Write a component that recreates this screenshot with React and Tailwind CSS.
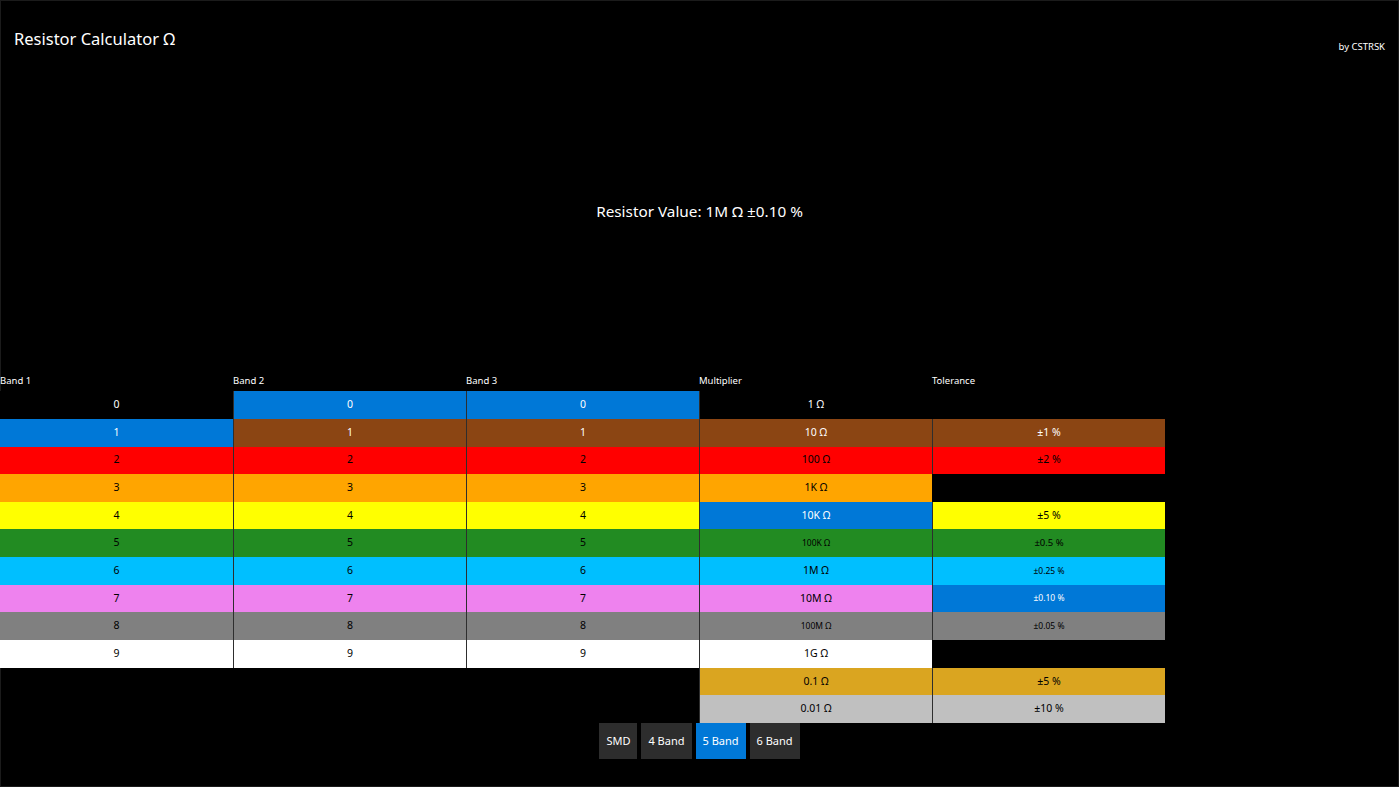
import React, { useState } from "react";

const C = {
  black: "bg-black text-white",
  blue: "bg-[#0078d7] text-white",
  brown: "bg-[#8b4513] text-white",
  red: "bg-[#ff0000] text-black",
  orange: "bg-[#ffa500] text-black",
  yellow: "bg-[#ffff00] text-black",
  green: "bg-[#228b22] text-black",
  sky: "bg-[#00bfff] text-black",
  violet: "bg-[#ee82ee] text-black",
  gray: "bg-[#808080] text-black",
  white: "bg-white text-black",
  gold: "bg-[#daa520] text-black",
  silver: "bg-[#c0c0c0] text-black",
  none: "bg-black",
};

const digitColors = ["black", "brown", "red", "orange", "yellow", "green", "sky", "violet", "gray", "white"];

const multipliers = [
  ["1 Ω", "black"],
  ["10 Ω", "brown"],
  ["100 Ω", "red"],
  ["1K Ω", "orange"],
  ["10K Ω", "yellow"],
  ["100K Ω", "green", "small"],
  ["1M Ω", "sky"],
  ["10M Ω", "violet"],
  ["100M Ω", "gray", "small"],
  ["1G Ω", "white"],
  ["0.1 Ω", "gold"],
  ["0.01 Ω", "silver"],
];

const tolerances = [
  [null, "none"],
  ["±1 %", "brown"],
  ["±2 %", "red"],
  [null, "none"],
  ["±5 %", "yellow"],
  ["±0.5 %", "green", "mid"],
  ["±0.25 %", "sky", "small"],
  ["±0.10 %", "violet", "small"],
  ["±0.05 %", "gray", "small"],
  [null, "none"],
  ["±5 %", "gold"],
  ["±10 %", "silver"],
];

function Cell({ label, color, selected, size, first }) {
  const cls = selected ? C.blue : C[color];
  const txt = size === "small" ? "text-[8.5px]" : size === "mid" ? "text-[9.5px]" : "text-[10.5px]";
  return (
    <div
      className={`h-[27.65px] flex items-center justify-center ${txt} ${cls} ${
        first || label === null ? "" : "border-l border-[#2e2e2e]"
      }`}
    >
      {label}
    </div>
  );
}

function Column({ title, items, selected, first }) {
  return (
    <div className="w-[233px] flex flex-col">
      <div className="h-[17px] text-[9.5px] leading-[14px] text-white">{title}</div>
      {items.map((it, i) => (
        <Cell
          key={i}
          label={it[0]}
          color={it[1]}
          size={it[2]}
          selected={i === selected && it[0] !== null}
          first={first}
        />
      ))}
    </div>
  );
}

export default function App() {
  const [mode, setMode] = useState("5 Band");
  const digits = digitColors.map((c, i) => [String(i), c]);

  return (
    <div
      className="w-full h-[787px] bg-black shadow-[inset_0_0_0_1px_#1b1b1b] text-white overflow-hidden flex flex-col"
      style={{ fontFamily: '"Segoe UI", "Noto Sans", "Open Sans", sans-serif' }}
    >
      {/* Header */}
      <div className="flex justify-between items-start pl-[14px] pr-[14px] pt-[26px]">
        <h1 className="text-[16.5px] leading-[26px] font-normal">Resistor Calculator Ω</h1>
        <span className="text-[9.5px] mt-[14px]">by CSTRSK</span>
      </div>

      {/* Value */}
      <div className="mt-[146px] text-center text-[15.3px] leading-[22px]">Resistor Value: 1M Ω ±0.10 %</div>

      {/* Table */}
      <div className="mt-[152px] flex">
        <Column title="Band 1" items={digits} selected={1} first />
        <Column title="Band 2" items={digits} selected={0} />
        <Column title="Band 3" items={digits} selected={0} />
        <Column title="Multiplier" items={multipliers} selected={4} />
        <Column title="Tolerance" items={tolerances} selected={7} />
      </div>

      {/* Mode buttons */}
      <div className="flex justify-center gap-[4px]">
        {["SMD", "4 Band", "5 Band", "6 Band"].map((m) => (
          <button
            key={m}
            onClick={() => setMode(m)}
            className={`h-[36px] px-[7px] text-[11px] text-white ${
              mode === m ? "bg-[#0078d7]" : "bg-[#2d2d2d]"
            }`}
          >
            {m}
          </button>
        ))}
      </div>
    </div>
  );
}
